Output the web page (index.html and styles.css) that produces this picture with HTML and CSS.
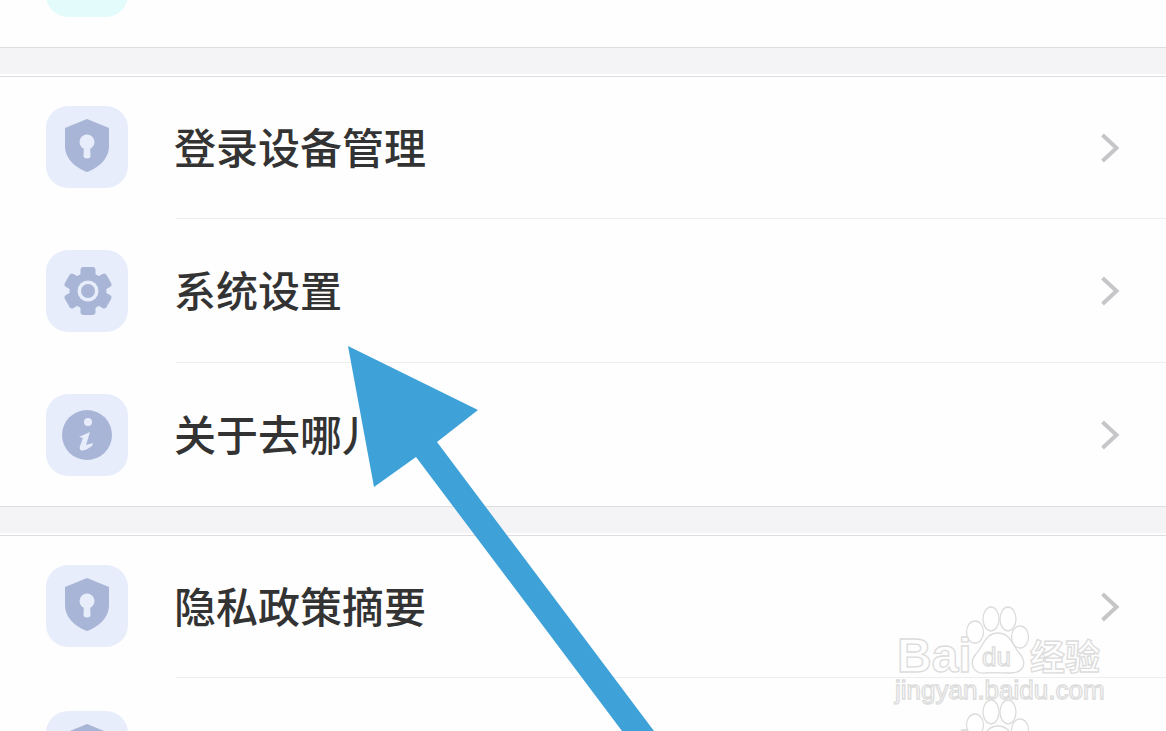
FILE: index.html
```html
<!DOCTYPE html>
<html lang="zh-CN">
<head>
    <meta charset="UTF-8">
    <title>设置</title>
    <link rel="stylesheet" href="styles.css">
</head>
<body>
    <svg width="0" height="0" class="defs">
        <defs>
            <symbol id="shield" viewBox="0 0 82 82">
                <path class="glyph" d="M41 13 L63 22 V40 C63 53 52 62 41 66 C30 62 19 53 19 40 V22 Z"/>
                <circle class="hole" cx="41" cy="36" r="7.5"/>
                <path class="hole" d="M38 38 H44 L44.5 51 Q41 54 37.5 51 Z"/>
            </symbol>
            <symbol id="gear" viewBox="0 0 82 82">
                <g class="glyph" transform="translate(42 41)">
                    <circle r="18.5"/>
                    <rect x="-7.5" y="-24" width="15" height="12" rx="3"/>
                    <rect x="-7.5" y="-24" width="15" height="12" rx="3" transform="rotate(60)"/>
                    <rect x="-7.5" y="-24" width="15" height="12" rx="3" transform="rotate(120)"/>
                    <rect x="-7.5" y="-24" width="15" height="12" rx="3" transform="rotate(180)"/>
                    <rect x="-7.5" y="-24" width="15" height="12" rx="3" transform="rotate(240)"/>
                    <rect x="-7.5" y="-24" width="15" height="12" rx="3" transform="rotate(300)"/>
                </g>
                <circle class="hole" cx="42" cy="41" r="10.5"/>
                <circle class="glyph" cx="42" cy="41" r="7"/>
            </symbol>
            <symbol id="info" viewBox="0 0 82 82">
                <circle class="glyph" cx="41" cy="41" r="25"/>
                <circle class="hole" cx="42" cy="28" r="4"/>
                <path class="hole" d="M33 43 L44 38 L40 51 L47 49 L46 52 Q39 57 35.500 56.500 Q33 56 34 52 L37 44 Z"/>
            </symbol>
            <symbol id="chevron" viewBox="0 0 20 30">
                <path class="chev" d="M2.500 2 L16.500 15 L2.500 28"/>
            </symbol>
        </defs>
    </svg>

    <main class="page">
        <section class="group group-first">
            <div class="row">
                <div class="tile tile-cyan"></div>
            </div>
        </section>
        <div class="gap"></div>
        <section class="group">
            <div class="row">
                <div class="tile"><svg class="tile-icon"><use href="#shield"/></svg></div>
                <div class="row-body">
                    <span class="label">登录设备管理</span>
                    <svg class="chevron"><use href="#chevron"/></svg>
                </div>
            </div>
            <div class="row">
                <div class="tile"><svg class="tile-icon"><use href="#gear"/></svg></div>
                <div class="row-body">
                    <span class="label">系统设置</span>
                    <svg class="chevron"><use href="#chevron"/></svg>
                </div>
            </div>
            <div class="row">
                <div class="tile"><svg class="tile-icon"><use href="#info"/></svg></div>
                <div class="row-body">
                    <span class="label">关于去哪儿</span>
                    <svg class="chevron"><use href="#chevron"/></svg>
                </div>
            </div>
        </section>
        <div class="gap"></div>
        <section class="group group-cut">
            <div class="row">
                <div class="tile"><svg class="tile-icon"><use href="#shield"/></svg></div>
                <div class="row-body">
                    <span class="label">隐私政策摘要</span>
                    <svg class="chevron"><use href="#chevron"/></svg>
                </div>
            </div>
            <div class="row">
                <div class="tile"><svg class="tile-icon"><use href="#shield"/></svg></div>
                <div class="row-body">
                    <span class="label">第三方个人信息共享清单</span>
                    <svg class="chevron"><use href="#chevron"/></svg>
                </div>
            </div>
        </section>
    </main>

    <!-- annotation and watermark drawn over the screenshot -->
    <svg class="arrow" viewBox="0 0 1166 731">
        <polygon points="348,346 478,410 437,442 654,731 622,731 416,457 374,487"/>
    </svg>

    <svg class="watermark" viewBox="0 0 230 200">
        <g id="wm">
            <text class="wm-text wm-bai" x="4" y="52">Bai</text>
            <ellipse class="wm-shape" cx="82" cy="12" rx="8.500" ry="11"/>
            <ellipse class="wm-shape" cx="98" cy="-1" rx="8" ry="12"/>
            <ellipse class="wm-shape" cx="115" cy="-1" rx="8" ry="12"/>
            <ellipse class="wm-shape" cx="127" cy="17" rx="8.500" ry="11"/>
            <path class="wm-shape" d="M105 13 C118 13 120 27 127 34 C134 43 131 53 117 53 C109 53 100 52 92 53 C79 54 76 42 83 34 C90 27 92 13 105 13 Z"/>
            <text class="wm-text wm-du" x="89" y="46">du</text>
            <text class="wm-text wm-cn" x="137" y="50">经验</text>
            <text class="wm-text wm-url" x="2" y="79">jingyan.baidu.com</text>
        </g>
        <use href="#wm" y="93"/>
    </svg>
</body>
</html>
```

FILE: styles.css
```css
* {
    box-sizing: border-box;
}
html,
body {
    margin: 0;
    height: 100%;
}
body {
    position: relative;
    overflow: hidden;
    background: #fefefe;
    font-family: "Noto Sans CJK SC", "Noto Sans", sans-serif;
    color: #333;
}
.defs {
    position: absolute;
}

/* list */
.page {
    display: flex;
    flex-direction: column;
}
.group {
    display: flex;
    flex-direction: column;
    background: #fefefe;
    border-top: 1px solid #dddde2;
    border-bottom: 1px solid #dddde2;
}
.group-first {
    margin-top: -96px;
}
.gap {
    flex: none;
    height: 26px;
    margin-bottom: 2px;
    background: #f4f4f7;
}
.row {
    flex: none;
    display: flex;
    align-items: center;
    height: 144px;
    padding-left: 46px;
}
.row:last-child {
    height: 143px;
}
.group-cut .row:last-child {
    height: 147px;
}
.row:first-child {
    height: 142px;
}
.tile {
    flex: none;
    width: 82px;
    height: 82px;
    margin-right: 48px;
    border-radius: 22px;
    background: #e8edfb;
}
.row:first-child .tile {
    margin-bottom: 2px;
}
.group-first .row:first-child .tile {
    margin-bottom: 0;
}
.tile-cyan {
    background: #e3fbfb;
}
.tile-icon {
    display: block;
    width: 82px;
    height: 82px;
}
.row-body {
    flex: 1;
    align-self: stretch;
    display: flex;
    align-items: center;
    justify-content: space-between;
    padding-right: 46px;
    border-bottom: 1px solid #eeeef0;
}
.row:last-child .row-body {
    border-bottom: none;
}
.label {
    margin: -4px 0 0 -2px;
    font-size: 42px;
    font-weight: 500;
    line-height: 56px;
}
.chevron {
    flex: none;
    width: 20px;
    height: 30px;
}

/* icon parts */
.glyph {
    fill: #a9b5d6;
}
.hole {
    fill: #e8edfb;
}
.chev {
    fill: none;
    stroke: #c6c6c8;
    stroke-width: 4;
}

/* overlays */
.arrow {
    position: absolute;
    top: 0;
    left: 0;
    width: 1166px;
    height: 731px;
}
.arrow polygon {
    fill: #3ea2d9;
}
.watermark {
    position: absolute;
    top: 620px;
    left: 893px;
    width: 230px;
    height: 200px;
    overflow: visible;
}
.wm-text,
.wm-shape {
    fill: rgba(255, 255, 255, 0.8);
    stroke: #dcdcdc;
    stroke-width: 1.3;
}
.wm-text {
    font-family: "Liberation Sans", sans-serif;
}
.wm-bai {
    font-size: 48px;
    font-weight: 700;
}
.wm-du {
    font-size: 26px;
}
.wm-cn {
    font-family: "Noto Sans CJK SC", sans-serif;
    font-size: 35px;
    font-weight: 700;
}
.wm-url {
    font-size: 26px;
}
```
